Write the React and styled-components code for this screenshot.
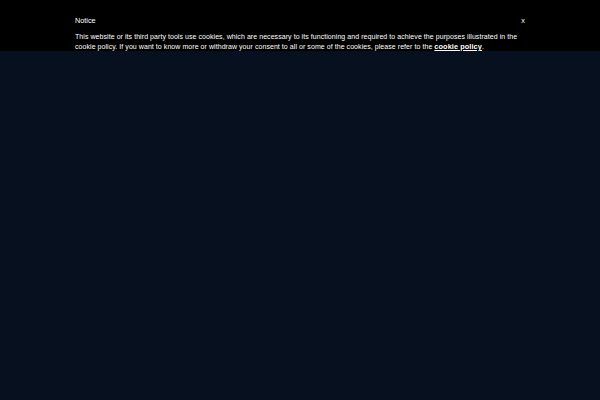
import styled, { createGlobalStyle } from 'styled-components';

const GlobalStyle = createGlobalStyle`
  html, body {
    margin: 0;
    padding: 0;
    background: #07101e;
  }
  body {
    font-family: "Liberation Sans", Arial, sans-serif;
  }
`;

const Page = styled.div`
  width: 600px;
  height: 400px;
  background: #07101e;
`;

const Banner = styled.section`
  background: #000000;
  color: #ffffff;
  padding: 16px 0 2px;
  height: 51px;
  box-sizing: border-box;
`;

const Inner = styled.div`
  width: 450px;
  margin: 0 auto;
`;

const Head = styled.div`
  display: flex;
  justify-content: space-between;
  align-items: center;
  font-size: 7.3px;
  line-height: 10px;
  margin-bottom: 6px;
`;

const Close = styled.button`
  background: none;
  border: 0;
  padding: 0;
  color: #ffffff;
  font: inherit;
  font-size: 7.3px;
  cursor: pointer;
`;

const Text = styled.p`
  margin: 0;
  font-size: 7px;
  line-height: 10px;
  letter-spacing: 0.06px;
`;

const PolicyLink = styled.a`
  color: #ffffff;
  font-weight: 700;
  font-size: 7.3px;
  letter-spacing: 0.1px;
  text-decoration: underline;
`;

export default function App() {
  return (
    <Page>
      <GlobalStyle />
      <Banner>
        <Inner>
          <Head>
            <span>Notice</span>
            <Close>x</Close>
          </Head>
          <Text>
            This website or its third party tools use cookies, which are necessary to its functioning and required to achieve the purposes illustrated in the cookie policy. If you want to know more or withdraw your consent to all or some of the cookies, please refer to the{' '}
            <PolicyLink href="#">cookie policy</PolicyLink>.
          </Text>
        </Inner>
      </Banner>
    </Page>
  );
}
